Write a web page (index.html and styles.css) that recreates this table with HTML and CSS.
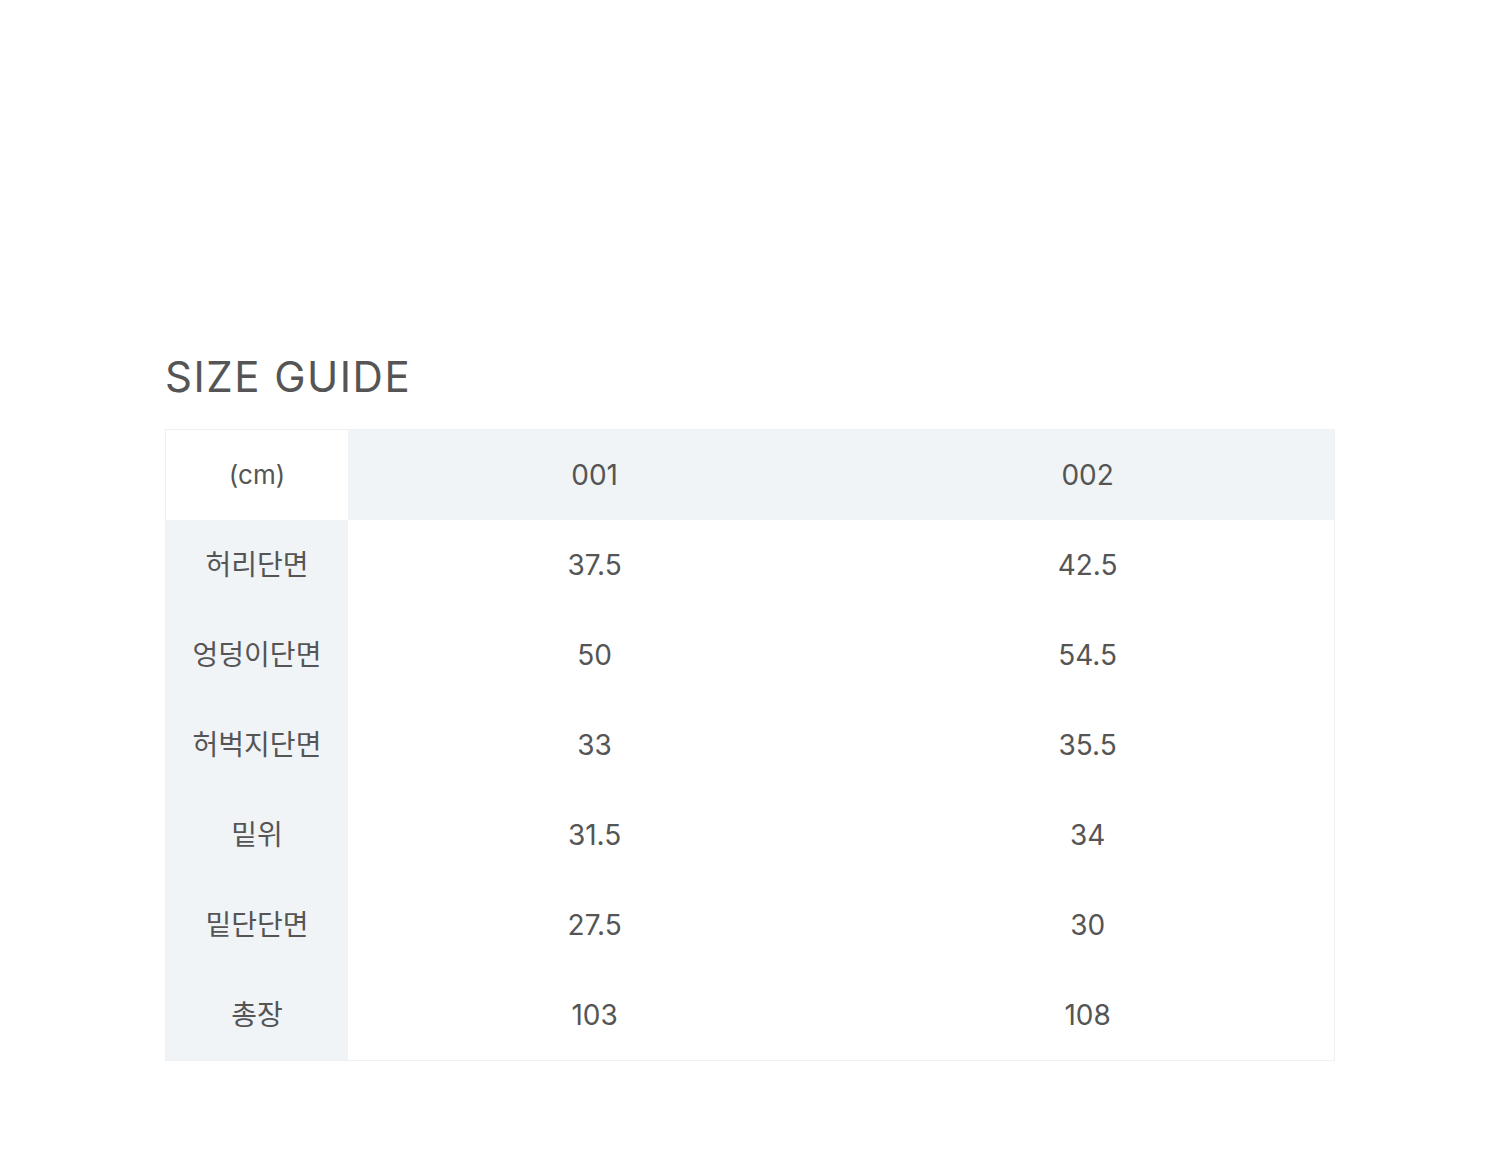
FILE: index.html
```html
<!DOCTYPE html>
<html lang="ko">
<head>
<meta charset="utf-8">
<title>Size Guide</title>
<link rel="stylesheet" href="styles.css">
</head>
<body>
<main class="page">
  <h2 class="title">SIZE GUIDE</h2>
  <table class="size-table">
    <thead>
      <tr>
        <th class="unit">(cm)</th>
        <th class="col">001</th>
        <th class="col">002</th>
      </tr>
    </thead>
    <tbody>
      <tr><th>허리단면</th><td>37.5</td><td>42.5</td></tr>
      <tr><th>엉덩이단면</th><td>50</td><td>54.5</td></tr>
      <tr><th>허벅지단면</th><td>33</td><td>35.5</td></tr>
      <tr><th>밑위</th><td>31.5</td><td>34</td></tr>
      <tr><th>밑단단면</th><td>27.5</td><td>30</td></tr>
      <tr><th>총장</th><td>103</td><td>108</td></tr>
    </tbody>
  </table>
</main>
</body>
</html>
```

FILE: styles.css
```css
html, body {
  margin: 0;
  padding: 0;
  background: #ffffff;
}
body {
  font-family: Inter, "Noto Sans CJK KR", sans-serif;
  color: #555555;
}
.page {
  padding: 350px 165px 0 165px;
}
.title {
  margin: 0 0 25px 0;
  font-size: 42px;
  font-weight: 400;
  line-height: 54px;
  letter-spacing: 1.5px;
  color: #555555;
}
.size-table {
  width: 1170px;
  border-collapse: collapse;
  table-layout: fixed;
  border: 1px solid #eef1f3;
}
.size-table th,
.size-table td {
  height: 90px;
  padding: 0;
  text-align: center;
  vertical-align: middle;
  font-weight: 400;
  font-size: 28px;
  line-height: 1;
  color: #555555;
}
.size-table thead th.unit {
  width: 182px;
  background: #ffffff;
  font-size: 26px;
}
.size-table thead th.col {
  background: #f0f4f7;
}
.size-table tbody th {
  background: #f0f4f7;
}
.size-table tbody td {
  background: #ffffff;
}
```
